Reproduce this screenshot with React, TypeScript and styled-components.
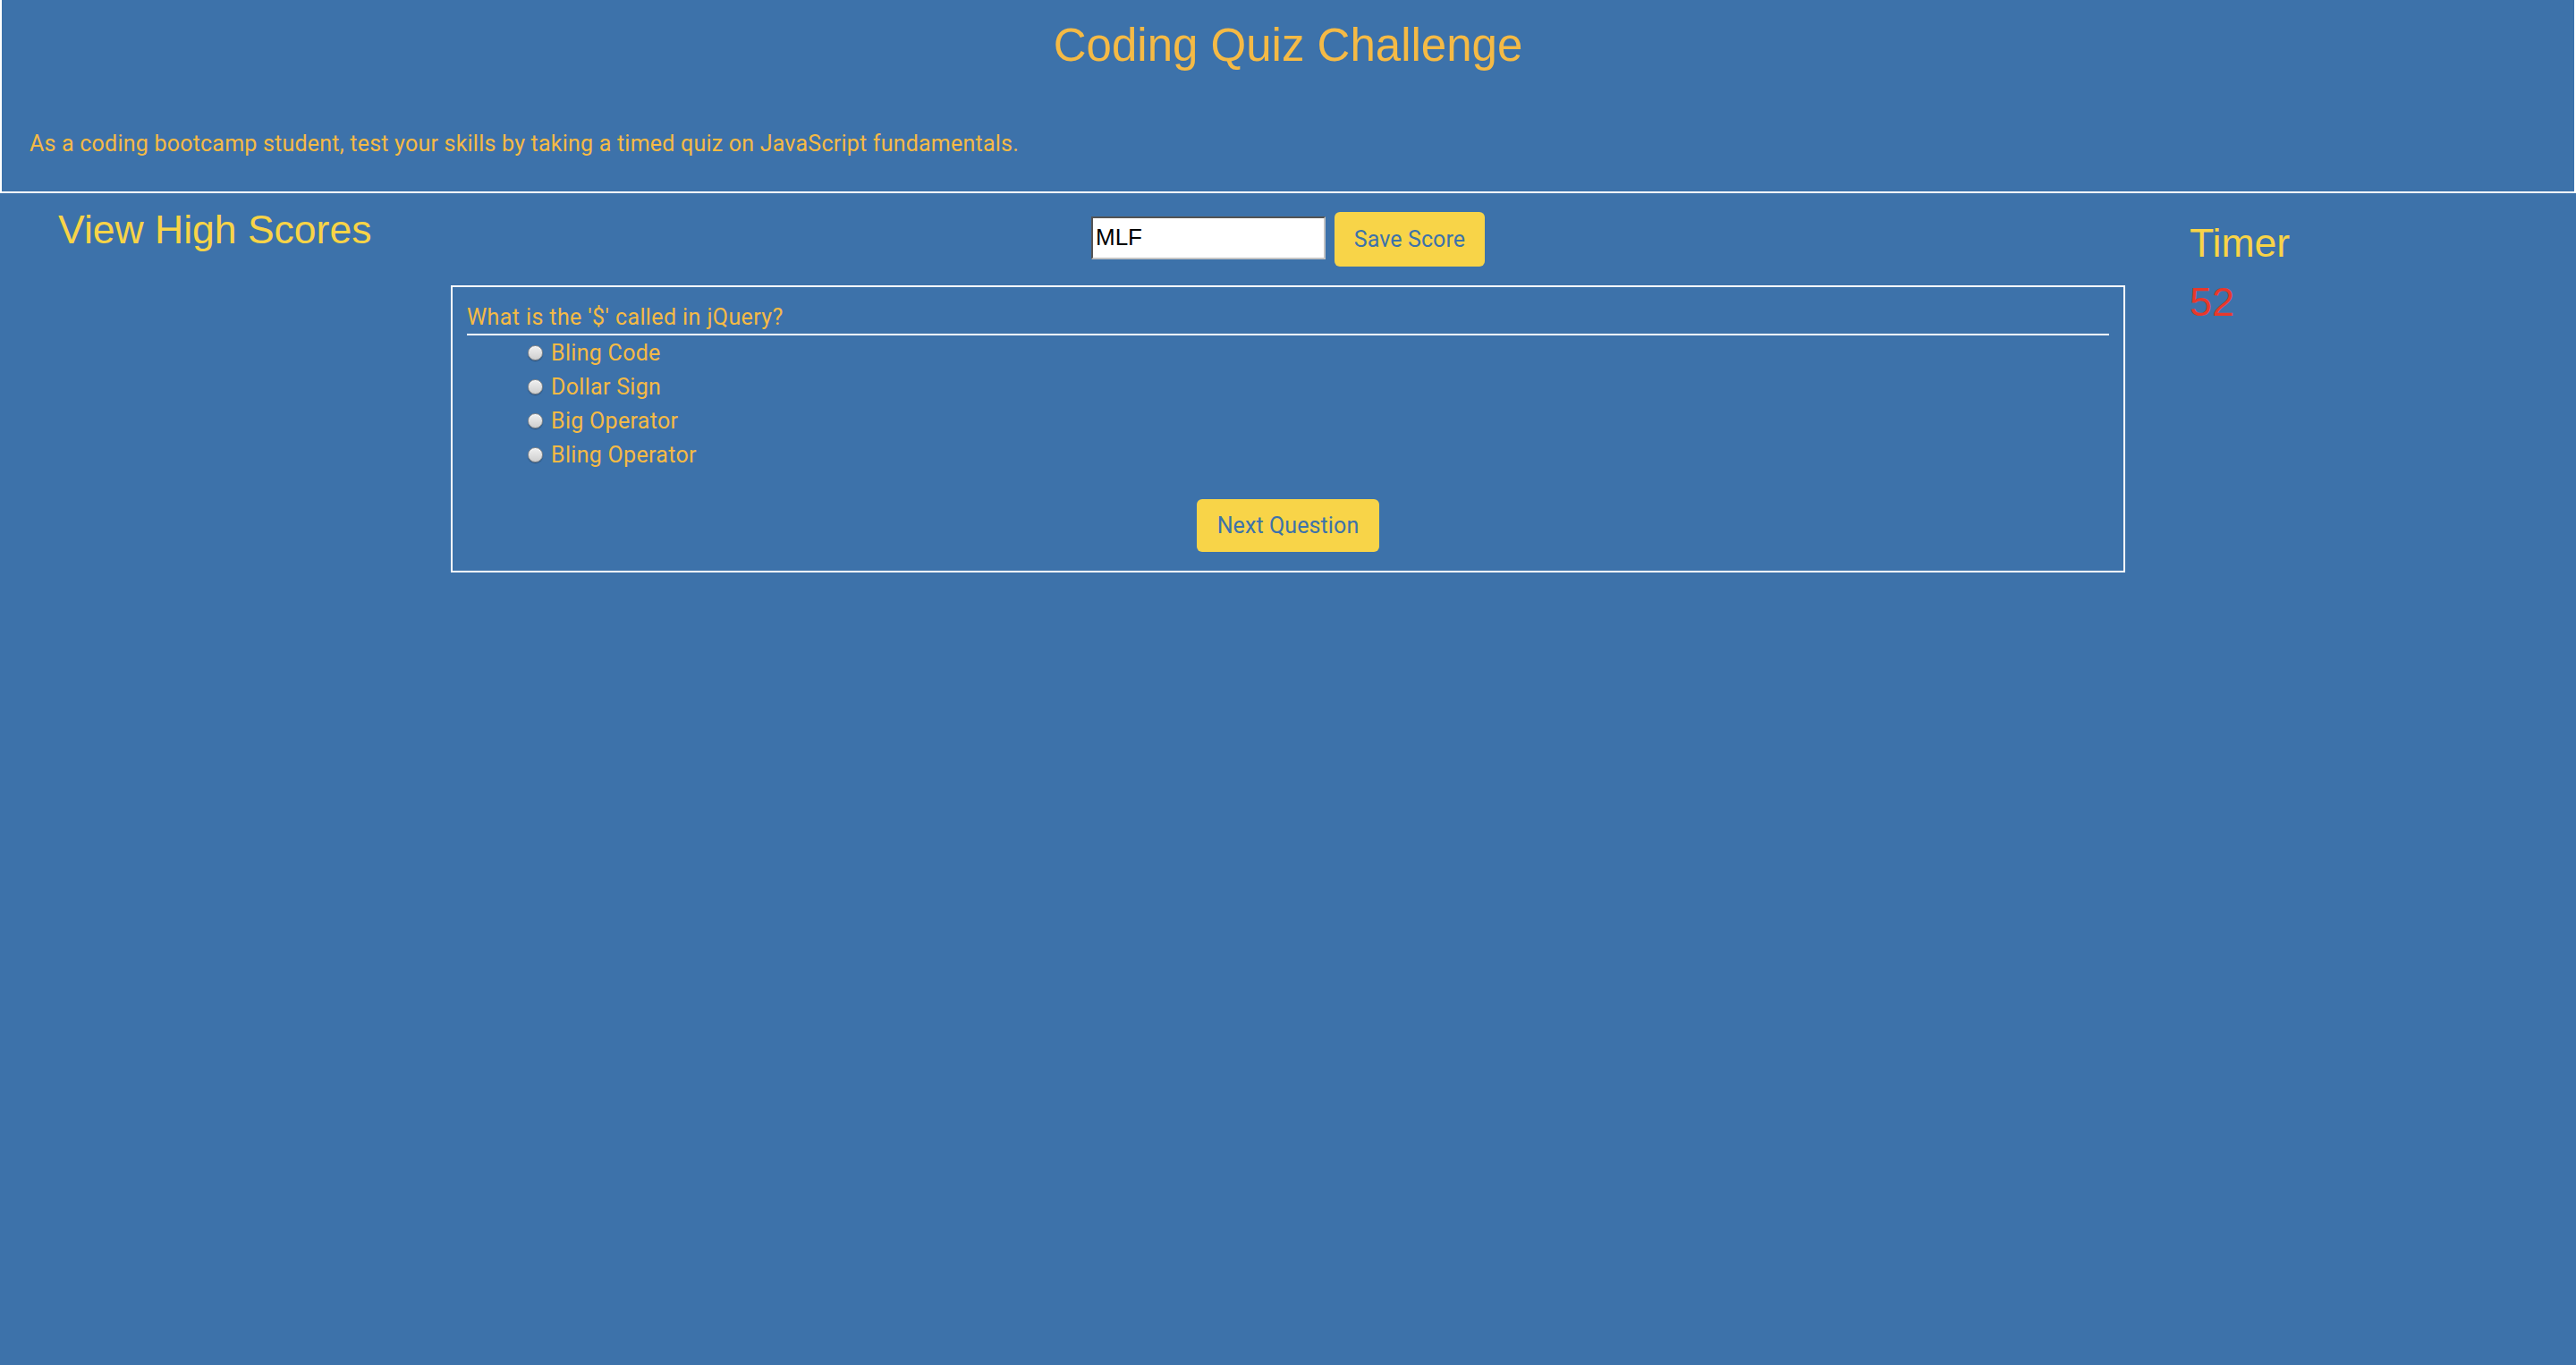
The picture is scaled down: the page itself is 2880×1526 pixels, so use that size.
import React from "react";
import styled, { createGlobalStyle } from "styled-components";

const GlobalStyle = createGlobalStyle`
  html, body {
    margin: 0;
    padding: 0;
    background: #3d72aa;
  }
  body {
    min-height: 1526px;
    font-family: "Liberation Sans", Arial, sans-serif;
  }
`;

const Page = styled.div`
  min-height: 1526px;
  background: #3d72aa;
`;

const Header = styled.header`
  border: 2px solid #ffffff;
  border-top: none;
  padding: 21px 31px 34px;
`;

const Title = styled.h1`
  margin: 0;
  font-family: "Liberation Sans", Arial, sans-serif;
  font-weight: 400;
  font-size: 51px;
  line-height: 60px;
  text-align: center;
  color: #f5ba45;
`;

const Intro = styled.p`
  margin: 61px 0 0;
  font-family: Roboto, "Noto Sans", sans-serif;
  font-size: 25px;
  line-height: 37.5px;
  letter-spacing: 0.22px;
  color: #f5ba45;
`;

const Main = styled.main`
  display: grid;
  grid-template-columns: 504px 1fr 504px;
  align-items: start;
`;

const SideColumn = styled.div<{ $left: number; $top: number }>`
  padding-left: ${(p) => p.$left}px;
  padding-top: ${(p) => p.$top}px;
`;

const Heading = styled.h2`
  margin: 0;
  font-family: "Liberation Sans", Arial, sans-serif;
  font-weight: 400;
  font-size: 44.5px;
  line-height: 52px;
  color: #f8d447;
`;

const TimerValue = styled.div`
  margin-top: 14px;
  font-family: "Liberation Sans", Arial, sans-serif;
  font-size: 45px;
  line-height: 52px;
  color: #e8382b;
`;

const Center = styled.div`
  display: flex;
  flex-direction: column;
  padding-top: 21px;
`;

const ScoreRow = styled.div`
  display: flex;
  justify-content: center;
  align-items: center;
  gap: 10px;
`;

const NameInput = styled.input`
  box-sizing: border-box;
  width: 262px;
  height: 48px;
  margin-bottom: 3px;
  padding: 0 3px;
  border: 2px inset #c4c4c4;
  border-top-color: #a8a8a8;
  border-left-color: #a8a8a8;
  background: #ffffff;
  font-family: "Liberation Sans", Arial, sans-serif;
  font-size: 26px;
  color: #000000;
  outline: none;
`;

const YellowButton = styled.button<{ $w: number; $h: number }>`
  box-sizing: border-box;
  width: ${(p) => p.$w}px;
  height: ${(p) => p.$h}px;
  padding: 0;
  border: none;
  border-radius: 6px;
  background: #f8d448;
  color: #3d72aa;
  font-family: Roboto, "Noto Sans", sans-serif;
  font-size: 25px;
  letter-spacing: 0.1px;
  cursor: pointer;
`;

const QuizBox = styled.section`
  margin-top: 21px;
  border: 2px solid #ffffff;
  padding: 15px 16px 21px;
  display: flex;
  flex-direction: column;
`;

const Question = styled.div`
  font-family: Roboto, "Noto Sans", sans-serif;
  font-size: 25px;
  line-height: 37.5px;
  letter-spacing: 0.4px;
  color: #f5ba45;
  border-bottom: 2px solid #ffffff;
`;

const Options = styled.ul`
  list-style: none;
  margin: 0;
  padding: 0 0 0 62px;
`;

const Option = styled.li`
  display: flex;
  align-items: center;
  height: 38px;
`;

const Radio = styled.input`
  appearance: none;
  -webkit-appearance: none;
  box-sizing: border-box;
  width: 17px;
  height: 17px;
  margin: 0 9px 0 6px;
  border-radius: 50%;
  border: 1px solid #8a8a8a;
  background: linear-gradient(#f0f0f0, #cfcfcf);
  box-shadow: inset 0 1px 1px rgba(255, 255, 255, 0.8), 0 1px 1px rgba(0, 0, 0, 0.3);
`;

const OptionLabel = styled.label`
  font-family: Roboto, "Noto Sans", sans-serif;
  font-size: 25px;
  letter-spacing: 0.3px;
  color: #f5ba45;
`;

const NextRow = styled.div`
  display: flex;
  justify-content: center;
  margin-top: 31px;
`;

const answers = ["Bling Code", "Dollar Sign", "Big Operator", "Bling Operator"];

export default function App() {
  return (
    <Page>
      <GlobalStyle />
      <Header>
        <Title>Coding Quiz Challenge</Title>
        <Intro>
          As a coding bootcamp student, test your skills by taking a timed quiz on JavaScript
          fundamentals.
        </Intro>
      </Header>
      <Main>
        <SideColumn $left={65} $top={15}>
          <Heading>View High Scores</Heading>
        </SideColumn>
        <Center>
          <ScoreRow>
            <NameInput defaultValue="MLF" />
            <YellowButton $w={168} $h={61}>Save Score</YellowButton>
          </ScoreRow>
          <QuizBox>
            <Question>What is the '$' called in jQuery?</Question>
            <Options>
              {answers.map((a, i) => (
                <Option key={a}>
                  <Radio type="radio" name="answer" id={`a${i}`} />
                  <OptionLabel htmlFor={`a${i}`}>{a}</OptionLabel>
                </Option>
              ))}
            </Options>
            <NextRow>
              <YellowButton $w={204} $h={59}>Next Question</YellowButton>
            </NextRow>
          </QuizBox>
        </Center>
        <SideColumn $left={72} $top={30}>
          <Heading>Timer</Heading>
          <TimerValue>52</TimerValue>
        </SideColumn>
      </Main>
    </Page>
  );
}
